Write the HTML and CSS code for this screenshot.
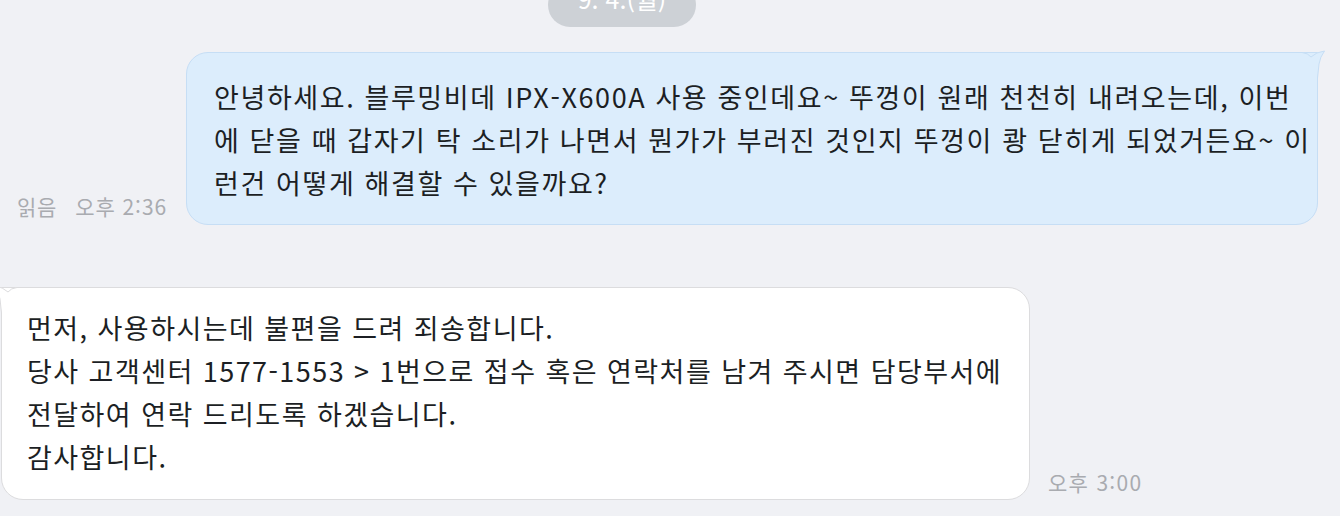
FILE: index.html
```html
<!DOCTYPE html>
<html lang="ko">
<head>
<meta charset="utf-8">
<link rel="stylesheet" href="styles.css">
</head>
<body>
<div class="chat">
  <div class="date-row"><div class="date-pill">9. 4.(월)</div></div>

  <div class="row row-out">
    <div class="meta meta-out"><span class="read">읽음</span><span>오후 2:36</span></div>
    <div class="bubble bubble-out">
      <svg class="tail tail-out" width="32" height="26" viewBox="0 0 32 26">
        <path d="M0 0.5 L6 0.5 Q12 1 15 5 Q20 0 28.5 -1 Q24 5 23 12 L21.5 26 L0 26 Z" fill="#dcedfc"/>
        <path d="M0 0.5 L6 0.5 Q12 1 15 5 Q20 0 28.5 -1 Q24 5 23 12 L21.5 26" fill="none" stroke="#c6def5" stroke-width="1"/>
      </svg>
      <p class="text">안녕하세요. 블루밍비데 IPX-X600A 사용 중인데요~ 뚜껑이 원래 천천히 내려오는데, 이번<br>에 닫을 때 갑자기 탁 소리가 나면서 뭔가가 부러진 것인지 뚜껑이 쾅 닫히게 되었거든요~ 이<br>런건 어떻게 해결할 수 있을까요?</p>
    </div>
  </div>

  <div class="row row-in">
    <div class="bubble bubble-in">
      <svg class="tail tail-in" width="32" height="26" viewBox="0 0 32 26">
        <path d="M32 0.5 L26 0.5 Q20 1 17 5 Q12 0 3.5 -1 Q8 5 9 12 L10.5 26 L32 26 Z" fill="#ffffff"/>
        <path d="M32 0.5 L26 0.5 Q20 1 17 5 Q12 0 3.5 -1 Q8 5 9 12 L10.5 26" fill="none" stroke="#dcdcde" stroke-width="1"/>
      </svg>
      <p class="text">먼저, 사용하시는데 불편을 드려 죄송합니다.<br>당사 고객센터 1577-1553 &gt; 1번으로 접수 혹은 연락처를 남겨 주시면 담당부서에<br>전달하여 연락 드리도록 하겠습니다.<br>감사합니다.</p>
    </div>
    <div class="meta meta-in"><span>오후 3:00</span></div>
  </div>
</div>
</body>
</html>
```

FILE: styles.css
```css
html, body {
  margin: 0;
  padding: 0;
}
body {
  background: #f0f1f5;
  width: 1340px;
  height: 516px;
  overflow: hidden;
  font-family: "Noto Sans CJK KR", "Noto Sans", sans-serif;
  color: #1c1f24;
}
.chat {
  display: flex;
  flex-direction: column;
}
.date-row {
  display: flex;
  margin-top: -17px;
  padding-left: 548px;
}
.date-pill {
  width: 148px;
  height: 44px;
  border-radius: 22px;
  background: #cdd1d6;
  color: #ffffff;
  font-size: 25px;
  line-height: 26px;
  box-sizing: border-box;
  padding-top: 2px;
  display: flex;
  align-items: flex-start;
  justify-content: center;
  overflow: hidden;
}
.row {
  display: flex;
  align-items: flex-end;
}
.row-out {
  justify-content: flex-end;
  margin-top: 25px;
  padding-right: 22px;
  gap: 19px;
}
.row-in {
  margin-top: 62px;
  padding-left: 1px;
  gap: 18px;
}
.bubble {
  position: relative;
  border-radius: 22px;
  box-sizing: border-box;
}
.bubble-out {
  width: 1132px;
  height: 173px;
  background: #dcedfc;
  border: 1px solid #c6def5;
  border-top-right-radius: 0;
  padding: 22px 27px 20px;
}
.bubble-in {
  width: 1029px;
  height: 213px;
  background: #ffffff;
  border: 1px solid #dcdcde;
  border-top-left-radius: 0;
  padding: 18px 25px 20px;
}
.text {
  margin: 0;
  font-size: 27px;
  line-height: 43px;
  letter-spacing: 1.6px;
  white-space: nowrap;
}
.bubble-in .text {
  letter-spacing: 1.45px;
}
.tail {
  position: absolute;
  top: -1px;
  overflow: visible;
}
.tail-out {
  right: -11px;
}
.tail-in {
  left: -11px;
}
.meta {
  display: flex;
  gap: 18px;
  font-size: 21px;
  letter-spacing: 0.9px;
  color: #a9abb0;
  line-height: 26px;
}
.meta-in {
  letter-spacing: 1.3px;
}
.meta-out {
  padding-bottom: 6px;
}
.meta-in {
  padding-bottom: 5px;
}
```
